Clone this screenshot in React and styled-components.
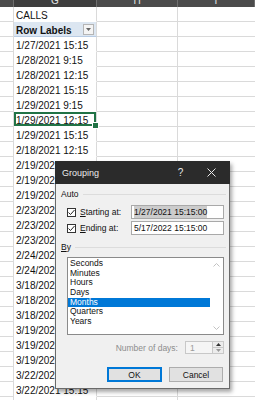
import React from 'react';
import styled, { createGlobalStyle } from 'styled-components';

const GlobalStyle = createGlobalStyle`
  html, body {
    margin: 0;
    padding: 0;
    background: #fff;
    overflow: hidden;
  }
  body {
    font-family: 'Liberation Sans', Arial, sans-serif;
  }
`;

// F is only a sliver at the left edge, so its letter is off screen
const columns = [
  { key: 'F', label: '' },
  { key: 'G', label: 'G' },
  { key: 'H', label: 'H' },
  { key: 'I', label: 'I' },
];

const rows = [
  { text: 'CALLS' },
  { text: 'Row Labels', header: true },
  { text: '1/27/2021 15:15' },
  { text: '1/28/2021 9:15' },
  { text: '1/28/2021 12:15' },
  { text: '1/28/2021 15:15' },
  { text: '1/29/2021 9:15' },
  { text: '1/29/2021 12:15', selected: true },
  { text: '1/29/2021 15:15' },
  { text: '2/18/2021 12:15' },
  { text: '2/19/2021 9:15' },
  { text: '2/19/2021 12:15' },
  { text: '2/19/2021 15:15' },
  { text: '2/23/2021 9:15' },
  { text: '2/23/2021 12:15' },
  { text: '2/23/2021 15:15' },
  { text: '2/24/2021 9:15' },
  { text: '2/24/2021 12:15' },
  { text: '3/18/2021 9:15' },
  { text: '3/18/2021 12:15' },
  { text: '3/18/2021 15:15' },
  { text: '3/19/2021 9:15' },
  { text: '3/19/2021 12:15' },
  { text: '3/19/2021 15:15' },
  { text: '3/22/2021 9:15' },
  { text: '3/22/2021 15:15' },
  { text: '3/23/2021 9:15' },
];

const units = ['Seconds', 'Minutes', 'Hours', 'Days', 'Months', 'Quarters', 'Years'];

const App = () => {
  return (
    <>
      <GlobalStyle />
      <Sheet>
        <HeaderRow>
          {columns.map((c) => (
            <ColHead key={c.key} $active={c.key === 'G'}>
              {c.label}
            </ColHead>
          ))}
        </HeaderRow>

        {rows.map((r, i) => (
          <Row key={i}>
            <Cell />
            <PivotCell $header={r.header} $selected={r.selected}>
              {r.text}
              {r.header && (
                <FilterButton>
                  <svg width="5" height="3" viewBox="0 0 5 3">
                    <path d="M0 0 L5 0 L2.5 3 Z" fill="#666" />
                  </svg>
                </FilterButton>
              )}
              {r.selected && <FillHandle />}
            </PivotCell>
            <Cell />
            <Cell $last />
          </Row>
        ))}

        <Dialog>
          <TitleBar>
            <Title>Grouping</Title>
            <TitleButton>?</TitleButton>
            <TitleButton>
              <svg width="9" height="9" viewBox="0 0 9 9">
                <path d="M0.5 0.5 L8.5 8.5 M8.5 0.5 L0.5 8.5" stroke="#e8e8e8" strokeWidth="1" />
              </svg>
            </TitleButton>
          </TitleBar>

          <Body>
            <GroupHead $top={5}>
              <span>Auto</span>
              <GroupLine />
            </GroupHead>

            <FieldRow $top={6}>
              <Check>
                <svg width="9" height="9" viewBox="0 0 9 9">
                  <path d="M1.5 4.5 L3.5 6.5 L7.5 2" stroke="#222" strokeWidth="1" fill="none" />
                </svg>
              </Check>
              <FieldLabel>
                <u>S</u>tarting at:
              </FieldLabel>
              <TextInput>
                <Selected>1/27/2021 15:15:00</Selected>
              </TextInput>
            </FieldRow>

            <FieldRow $top={2}>
              <Check>
                <svg width="9" height="9" viewBox="0 0 9 9">
                  <path d="M1.5 4.5 L3.5 6.5 L7.5 2" stroke="#222" strokeWidth="1" fill="none" />
                </svg>
              </Check>
              <FieldLabel>
                <u>E</u>nding at:
              </FieldLabel>
              <TextInput>5/17/2022 15:15:00</TextInput>
            </FieldRow>

            <GroupHead $top={7}>
              <span>
                <u>B</u>y
              </span>
              <GroupLine />
            </GroupHead>

            <ListBox>
              <Items>
                {units.map((u) => (
                  <Item key={u} $active={u === 'Months'}>
                    {u}
                  </Item>
                ))}
              </Items>
              <ScrollTrack>
                <svg width="7" height="4" viewBox="0 0 7 4">
                  <path d="M0.5 3.5 L3.5 0.5 L6.5 3.5" stroke="#c2c2c2" fill="none" />
                </svg>
                <svg width="7" height="4" viewBox="0 0 7 4">
                  <path d="M0.5 0.5 L3.5 3.5 L6.5 0.5" stroke="#c2c2c2" fill="none" />
                </svg>
              </ScrollTrack>
            </ListBox>

            <DaysRow>
              <DisabledLabel>Number of days:</DisabledLabel>
              <Spin>
                <SpinValue>1</SpinValue>
                <SpinButtons>
                  <SpinHalf>
                    <svg width="5" height="3" viewBox="0 0 5 3">
                      <path d="M0 3 L5 3 L2.5 0 Z" fill="#333" />
                    </svg>
                  </SpinHalf>
                  <SpinHalf $bottom>
                    <svg width="5" height="3" viewBox="0 0 5 3">
                      <path d="M0 0 L5 0 L2.5 3 Z" fill="#9a9a9a" />
                    </svg>
                  </SpinHalf>
                </SpinButtons>
              </Spin>
            </DaysRow>

            <ButtonRow>
              <Button $primary>OK</Button>
              <Button>Cancel</Button>
            </ButtonRow>
          </Body>
        </Dialog>
      </Sheet>
    </>
  );
};

const Sheet = styled.div`
  position: relative;
  width: 255px;
  height: 400px;
  overflow: hidden;
  background: #fff;
`;

const HeaderRow = styled.div`
  display: grid;
  grid-template-columns: 14px 83px 81px 1fr;
  height: 7px;
  background: #4b4b4b;
`;

const ColHead = styled.div`
  display: flex;
  justify-content: center;
  align-items: flex-end;
  overflow: hidden;
  box-sizing: border-box;
  border-right: 1px solid #6e6e6e;
  background: ${(p) => (p.$active ? '#3e3e3e' : '#4b4b4b')};
  color: #e4e4e4;
  font-size: 10px;
  line-height: 12px;
`;

const Row = styled.div`
  display: grid;
  grid-template-columns: 14px 83px 81px 1fr;
  height: 15px;
`;

const Cell = styled.div`
  box-sizing: border-box;
  border-right: ${(p) => (p.$last ? 'none' : '1px solid #dadada')};
  border-bottom: 1px solid #dadada;
`;

const PivotCell = styled.div`
  position: relative;
  box-sizing: border-box;
  display: flex;
  align-items: center;
  padding: 2px 0 0 2px;
  border-right: 1px solid #dadada;
  border-bottom: 1px solid ${(p) => (p.$header ? '#b8cce4' : 'transparent')};
  background: ${(p) => (p.$header ? '#dce6f1' : '#fff')};
  box-shadow: ${(p) => (p.$selected ? 'inset 0 0 0 2px #217346' : 'none')};
  color: #111;
  font-size: 10px;
  font-weight: ${(p) => (p.$header ? 'bold' : 'normal')};
  white-space: nowrap;
`;

const FilterButton = styled.div`
  position: absolute;
  right: 2px;
  top: 2px;
  width: 11px;
  height: 11px;
  box-sizing: border-box;
  display: flex;
  align-items: center;
  justify-content: center;
  background: #f4f4f4;
  border: 1px solid #b5b5b5;
`;

const FillHandle = styled.div`
  position: absolute;
  right: -3px;
  bottom: -3px;
  width: 5px;
  height: 5px;
  background: #217346;
  border: 1px solid #fff;
  z-index: 1;
`;

const Dialog = styled.div`
  position: absolute;
  left: 55px;
  top: 161px;
  width: 175px;
  height: 228px;
  box-sizing: border-box;
  display: flex;
  flex-direction: column;
  background: #f0f0f0;
  border: 1px solid #6a6a6a;
  box-shadow: 2px 3px 4px rgba(0, 0, 0, 0.35);
  font-size: 8.5px;
  color: #111;
  z-index: 2;
`;

const TitleBar = styled.div`
  display: flex;
  align-items: center;
  height: 23px;
  margin: -1px -1px 0;
  padding: 0 3px 0 7px;
  background: #2b2b2b;
  color: #ececec;
`;

const Title = styled.div`
  flex: 1;
  font-size: 9px;
`;

const TitleButton = styled.div`
  width: 31px;
  display: flex;
  justify-content: center;
  align-items: center;
  font-size: 10px;
  color: #e8e8e8;
`;

const Body = styled.div`
  display: flex;
  flex-direction: column;
`;

const GroupHead = styled.div`
  display: flex;
  align-items: center;
  gap: 4px;
  height: 10px;
  margin-top: ${(p) => p.$top}px;
  padding: 0 3px 0 5px;
`;

const GroupLine = styled.div`
  flex: 1;
  height: 1px;
  background: #dcdcdc;
`;

const FieldRow = styled.div`
  display: flex;
  align-items: center;
  height: 14px;
  margin-top: ${(p) => p.$top}px;
  padding: 0 5px 0 11px;
`;

const Check = styled.div`
  width: 9px;
  height: 9px;
  box-sizing: border-box;
  display: flex;
  background: #fff;
  border: 1px solid #333;
  svg {
    margin: -1px;
  }
`;

const FieldLabel = styled.div`
  margin-left: 4px;
  flex: 1;
`;

const TextInput = styled.div`
  width: 93px;
  height: 14px;
  box-sizing: border-box;
  display: flex;
  align-items: center;
  padding-left: 2px;
  background: #fff;
  border: 1px solid #a9a9a9;
  white-space: nowrap;
`;

const Selected = styled.span`
  background: #cccccc;
  padding: 1px 0;
`;

const ListBox = styled.div`
  display: flex;
  height: 78px;
  margin: 5px 5px 0 11px;
  box-sizing: border-box;
  background: #fff;
  border: 1px solid #8a8a8a;
`;

const Items = styled.div`
  flex: 1;
  padding-top: 1px;
`;

const Item = styled.div`
  height: 9.67px;
  line-height: 9.67px;
  padding-left: 2px;
  background: ${(p) => (p.$active ? '#0078d7' : 'transparent')};
  color: ${(p) => (p.$active ? '#fff' : '#111')};
`;

const ScrollTrack = styled.div`
  width: 13px;
  display: flex;
  flex-direction: column;
  justify-content: space-between;
  align-items: center;
  padding: 5px 0 4px;
`;

const DaysRow = styled.div`
  display: flex;
  align-items: center;
  justify-content: flex-end;
  gap: 7px;
  height: 13px;
  margin-top: 6px;
  padding-right: 5px;
`;

const DisabledLabel = styled.div`
  color: #8d8d8d;
`;

const Spin = styled.div`
  display: flex;
  height: 13px;
`;

const SpinValue = styled.div`
  width: 27px;
  box-sizing: border-box;
  display: flex;
  align-items: center;
  padding-left: 4px;
  background: #f5f5f5;
  border: 1px solid #c8c8c8;
  border-right: none;
  color: #9a9a9a;
`;

const SpinButtons = styled.div`
  width: 12px;
  box-sizing: border-box;
  display: flex;
  flex-direction: column;
  border: 1px solid #c8c8c8;
  background: #ececec;
`;

const SpinHalf = styled.div`
  flex: 1;
  display: flex;
  align-items: center;
  justify-content: center;
  border-top: ${(p) => (p.$bottom ? '1px solid #c8c8c8' : 'none')};
`;

const ButtonRow = styled.div`
  display: flex;
  justify-content: flex-end;
  gap: 7px;
  margin-top: 13px;
  padding-right: 6px;
`;

const Button = styled.div`
  width: ${(p) => (p.$primary ? '55px' : '54px')};
  height: 15px;
  box-sizing: border-box;
  display: flex;
  align-items: center;
  justify-content: center;
  background: #e1e1e1;
  border: 1px solid ${(p) => (p.$primary ? '#0078d7' : '#adadad')};
  box-shadow: ${(p) => (p.$primary ? 'inset 0 0 0 1px #0078d7' : 'none')};
  color: #111;
`;

export default App;
